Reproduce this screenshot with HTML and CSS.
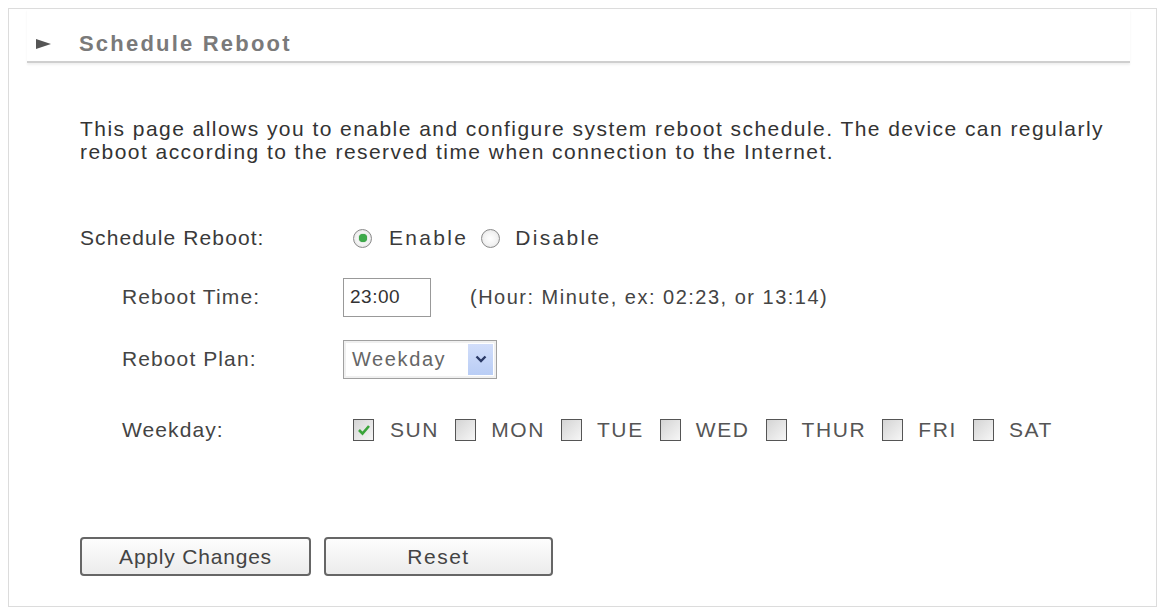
FILE: index.html
```html
<!DOCTYPE html>
<html>
<head>
<meta charset="utf-8">
<link rel="stylesheet" href="styles.css">
</head>
<body>
<div class="frame">
  <div class="header">
    <span class="tri"></span>
    <span class="title">Schedule Reboot</span>
  </div>
  <div class="content">
    <p class="intro">This page allows you to enable and configure system reboot schedule. The device can regularly reboot according to the reserved time when connection to the Internet.</p>
    <div class="row r1">
      <div class="label">Schedule Reboot:</div>
      <div class="value">
        <span class="radio on"></span><span class="opt">Enable</span>
        <span class="radio second"></span><span class="opt">Disable</span>
      </div>
    </div>
    <div class="row r2">
      <div class="label sub">Reboot Time:</div>
      <div class="value">
        <span class="textbox">23:00</span>
        <span class="hint">(Hour: Minute, ex: 02:23, or 13:14)</span>
      </div>
    </div>
    <div class="row r3">
      <div class="label sub">Reboot Plan:</div>
      <div class="value">
        <span class="select"><span class="sel-text">Weekday</span><span class="sel-btn"><svg width="12" height="8" viewBox="0 0 12 8"><path d="M1.5 1.5 L6 6 L10.5 1.5" fill="none" stroke="#2b3a66" stroke-width="2.4"/></svg></span></span>
      </div>
    </div>
    <div class="row r4">
      <div class="label sub">Weekday:</div>
      <div class="value days">
        <span class="cb on"><svg width="14" height="12" viewBox="0 0 14 12"><path d="M2 6 L5.5 9.5 L12 2" fill="none" stroke="#3aa43a" stroke-width="2.6"/></svg></span><span class="day">SUN</span>
        <span class="cb"></span><span class="day">MON</span>
        <span class="cb"></span><span class="day">TUE</span>
        <span class="cb"></span><span class="day">WED</span>
        <span class="cb"></span><span class="day">THUR</span>
        <span class="cb"></span><span class="day">FRI</span>
        <span class="cb"></span><span class="day">SAT</span>
      </div>
    </div>
    <div class="buttons">
      <span class="btn apply">Apply Changes</span>
      <span class="btn reset">Reset</span>
    </div>
  </div>
</div>
</body>
</html>
```
FILE: styles.css
```css
html, body {
  margin: 0;
  padding: 0;
  background: #fff;
}
body {
  font-family: "Liberation Sans", Arial, sans-serif;
  color: #333;
}
.frame {
  margin: 8px 0 0 8px;
  width: 1147px;
  height: 597px;
  border: 1px solid #dcdcdc;
}
.header {
  margin: 0 26px 0 18px;
  height: 54px;
  box-sizing: border-box;
  padding-top: 17px;
  display: flex;
  align-items: center;
  border-bottom: 2px solid #cfcfcf;
  box-shadow: 0 2px 2px rgba(0,0,0,0.06);
}
.tri {
  width: 0;
  height: 0;
  border-left: 15px solid #555;
  border-top: 5px solid transparent;
  border-bottom: 5px solid transparent;
  margin-left: 9px;
}
.title {
  margin-left: 28px;
  font-weight: bold;
  font-size: 22px;
  letter-spacing: 2.2px;
  color: #7a7a7a;
}
.content {
  padding-left: 71px;
}
.intro {
  margin: 54px 0 0 0;
  font-size: 21px;
  letter-spacing: 1.45px;
  line-height: 23px;
  width: 1050px;
  color: #333;
}
.row {
  display: flex;
  align-items: center;
  height: 40px;
  font-size: 21px;
}
.r1 { margin-top: 55px; }
.r2 { margin-top: 19px; }
.r3 { margin-top: 22px; }
.r4 { margin-top: 31px; }
.label {
  width: 263px;
  flex: none;
  color: #3a3a3a;
  letter-spacing: 1.1px;
}
.label.sub {
  padding-left: 42px;
  width: 221px;
  color: #444;
}
.value {
  display: flex;
  align-items: center;
}
.radio {
  width: 19px;
  height: 19px;
  border-radius: 50%;
  border: 1px solid #8a8a8a;
  background: radial-gradient(circle, #fff 0, #f2f2f2 55%, #d6d6d6 100%);
  margin-left: 10px;
  margin-right: 17px;
  box-sizing: border-box;
  display: flex;
  align-items: center;
  justify-content: center;
  flex: none;
}
.radio.on::after {
  content: "";
  width: 8px;
  height: 8px;
  border-radius: 50%;
  background: #3daa4a;
  box-shadow: 0 0 1px #2a7a34;
}
.radio.second { margin-left: 13px; margin-right: 15px; }
.opt { color: #3a3a3a; letter-spacing: 2.3px; }
.textbox {
  width: 88px;
  height: 39px;
  border: 1px solid #999;
  box-sizing: border-box;
  display: flex;
  align-items: center;
  padding-left: 6px;
  color: #333;
  font-size: 19px;
  letter-spacing: 0.5px;
}
.hint {
  margin-left: 39px;
  color: #444;
  font-size: 20px;
  letter-spacing: 1.5px;
}
.select {
  width: 154px;
  height: 39px;
  border: 1px solid #a0a0a0;
  box-sizing: border-box;
  display: flex;
  align-items: center;
  justify-content: space-between;
  padding: 0 3px 0 8px;
  box-shadow: inset 0 0 0 2px #f0f0f0;
}
.sel-text {
  color: #666;
  font-size: 20px;
  letter-spacing: 1.6px;
}
.sel-btn {
  width: 25px;
  height: 31px;
  background: linear-gradient(#d2defa, #b9cdf5);
  display: flex;
  align-items: center;
  justify-content: center;
}
.cb {
  width: 21px;
  height: 22px;
  border: 1px solid #555;
  background: linear-gradient(135deg, #d4d4d4, #f6f6f6);
  box-sizing: border-box;
  margin-left: 10px;
  margin-right: 16px;
  display: flex;
  align-items: center;
  justify-content: center;
  flex: none;
}
.day + .cb { margin-left: 16px; margin-right: 15px; }
.day { color: #555; letter-spacing: 1.6px; }
.buttons {
  display: flex;
  margin-top: 87px;
  gap: 13px;
}
.btn {
  height: 39px;
  border: 2px solid #666;
  border-radius: 4px;
  box-sizing: border-box;
  background: linear-gradient(#fdfdfd, #ececec);
  display: flex;
  align-items: center;
  justify-content: center;
  font-size: 21px;
  letter-spacing: 0.8px;
  color: #444;
}
.btn.apply { width: 231px; }
.btn.reset { width: 229px; letter-spacing: 1.5px; }
```
